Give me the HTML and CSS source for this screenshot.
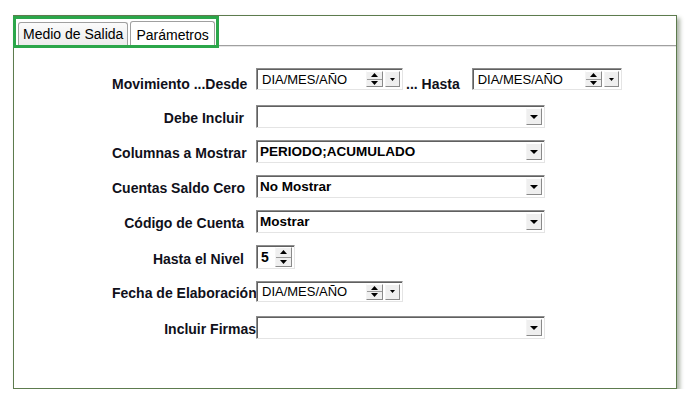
FILE: index.html
```html
<!DOCTYPE html>
<html lang="es">
<head>
<meta charset="utf-8">
<title>Parámetros</title>
<link rel="stylesheet" href="styles.css">
</head>
<body>
<div class="frame">
  <div class="tabs">
    <div class="tab">Medio de Salida</div>
    <div class="tab active">Parámetros</div>
  </div>
  <div class="highlight"></div>

  <div class="form">
    <div class="row row-end">
      <div class="label label-low">Movimiento ...Desde</div>
      <div class="date">
        <span class="value">DIA/MES/AÑO</span>
        <span class="spin"><span class="half"><svg width="7" height="4" viewBox="0 0 7 4"><path d="M3.5 0L7 4H0z"/></svg></span><span class="half"><svg width="7" height="4" viewBox="0 0 7 4"><path d="M0 0h7L3.5 4z"/></svg></span></span>
        <span class="dd small"><svg width="5" height="3" viewBox="0 0 5 3"><path d="M0 0h5L2.5 3z"/></svg></span>
      </div>
      <span class="inline-label">... Hasta</span>
      <div class="date date-wide">
        <span class="value">DIA/MES/AÑO</span>
        <span class="spin"><span class="half"><svg width="7" height="4" viewBox="0 0 7 4"><path d="M3.5 0L7 4H0z"/></svg></span><span class="half"><svg width="7" height="4" viewBox="0 0 7 4"><path d="M0 0h7L3.5 4z"/></svg></span></span>
        <span class="dd small"><svg width="5" height="3" viewBox="0 0 5 3"><path d="M0 0h5L2.5 3z"/></svg></span>
      </div>
    </div>

    <div class="row row-gap">
      <div class="label">Debe Incluir</div>
      <div class="select">
        <span class="value"></span>
        <span class="dd"><svg width="8" height="4" viewBox="0 0 8 4"><path d="M0 0h8L4 4z"/></svg></span>
      </div>
    </div>

    <div class="row">
      <div class="label">Columnas a Mostrar</div>
      <div class="select">
        <span class="value">PERIODO;ACUMULADO</span>
        <span class="dd"><svg width="8" height="4" viewBox="0 0 8 4"><path d="M0 0h8L4 4z"/></svg></span>
      </div>
    </div>

    <div class="row">
      <div class="label">Cuentas Saldo Cero</div>
      <div class="select">
        <span class="value">No Mostrar</span>
        <span class="dd"><svg width="8" height="4" viewBox="0 0 8 4"><path d="M0 0h8L4 4z"/></svg></span>
      </div>
    </div>

    <div class="row">
      <div class="label">Código de Cuenta</div>
      <div class="select">
        <span class="value">Mostrar</span>
        <span class="dd"><svg width="8" height="4" viewBox="0 0 8 4"><path d="M0 0h8L4 4z"/></svg></span>
      </div>
    </div>

    <div class="row">
      <div class="label">Hasta el Nivel</div>
      <div class="num">
        <span class="value">5</span>
        <span class="spin tall"><span class="half"><svg width="7" height="4" viewBox="0 0 7 4"><path d="M3.5 0L7 4H0z"/></svg></span><span class="half"><svg width="7" height="4" viewBox="0 0 7 4"><path d="M0 0h7L3.5 4z"/></svg></span></span>
      </div>
    </div>

    <div class="row">
      <div class="label">Fecha de Elaboración</div>
      <div class="date date-short">
        <span class="value">DIA/MES/AÑO</span>
        <span class="spin"><span class="half"><svg width="7" height="4" viewBox="0 0 7 4"><path d="M3.5 0L7 4H0z"/></svg></span><span class="half"><svg width="7" height="4" viewBox="0 0 7 4"><path d="M0 0h7L3.5 4z"/></svg></span></span>
        <span class="dd small"><svg width="5" height="3" viewBox="0 0 5 3"><path d="M0 0h5L2.5 3z"/></svg></span>
      </div>
    </div>

    <div class="row row-gap-s">
      <div class="label label-flush">Incluir Firmas</div>
      <div class="select">
        <span class="value"></span>
        <span class="dd"><svg width="8" height="4" viewBox="0 0 8 4"><path d="M0 0h8L4 4z"/></svg></span>
      </div>
    </div>
  </div>
</div>
</body>
</html>
```

FILE: styles.css
```css
* { box-sizing: border-box; }

body {
  margin: 0;
  background: #fff;
  font-family: "Liberation Sans", Arial, sans-serif;
  color: #000;
}

.frame {
  position: relative;
  margin: 15px 0 0 13px;
  width: 664px;
  height: 374px;
  border: 1px solid #5d7b4e;
  background: #fff;
  box-shadow: 3px 3px 4px rgba(70, 90, 60, 0.45);
}

.tabs {
  display: flex;
  align-items: flex-end;
  height: 30px;
  padding-left: 4px;
  border-bottom: 1px solid #a0a0a0;
  box-shadow: 0 1px 0 #e6e6e6;
}

.tab {
  height: 23px;
  padding: 2px 4px 0;
  font-size: 14px;
  line-height: 19px;
  border: 1px solid #a0a0a0;
  border-bottom: none;
  border-radius: 3px 3px 0 0;
  background: linear-gradient(#fbfbfb, #ececec);
  white-space: nowrap;
}

.tab.active {
  height: 25px;
  margin-left: 2px;
  margin-bottom: -1px;
  padding: 4px 5px 0;
  background: #fff;
}

.highlight {
  position: absolute;
  left: -1px;
  top: 0;
  width: 206px;
  height: 32px;
  border: 3px solid #2ba64a;
  pointer-events: none;
}

.form {
  display: flex;
  flex-direction: column;
  gap: 12px;
  padding-top: 22px;
}

.row {
  display: flex;
  align-items: center;
}

.row-end { align-items: flex-end; }
.row-gap { margin-top: 3px; }
.row-gap-s { margin-top: 2px; }

.label {
  width: 144px;
  margin-left: 98px;
  padding: 3px 12px 0 0;
  text-align: right;
  font-size: 14px;
  font-weight: bold;
  color: #10101a;
  white-space: nowrap;
  overflow: hidden;
}

.label-low {
  padding-top: 0;
  margin-bottom: -2px;
}

.label-flush { padding-right: 0; }

.inline-label {
  margin: 0 12px -2px 3px;
  font-size: 14px;
  font-weight: bold;
  color: #10101a;
  white-space: nowrap;
}

.select, .date, .num {
  display: flex;
  align-items: center;
  background: #fff;
  border: 1px solid;
  border-color: #8e8e8e #e4e4e4 #e4e4e4 #8e8e8e;
  box-shadow: inset 1px 1px 0 #606060;
}

.select { width: 289px; height: 23px; }
.date { width: 147px; height: 22px; }
.date-wide { width: 150px; }
.date-short { height: 21px; }
.num { width: 39px; height: 24px; }

.value {
  flex: 1;
  padding-left: 3px;
  white-space: nowrap;
  overflow: hidden;
}

.select .value {
  font-size: 13.5px;
  font-weight: bold;
}

.date .value {
  padding-left: 5px;
  font-size: 13px;
}

.num .value {
  padding-left: 4px;
  font-size: 14px;
  font-weight: bold;
}

.dd {
  display: flex;
  align-items: center;
  justify-content: center;
  width: 16px;
  height: 17px;
  margin-right: 2px;
  background: #efefef;
  border: 1px solid;
  border-color: #fff #8a8a8a #8a8a8a #f4f4f4;
}

.dd.small {
  width: 15px;
  height: 16px;
  margin-left: 2px;
}

.spin {
  display: flex;
  flex-direction: column;
  width: 17px;
  height: 16px;
  background: #efefef;
  border: 1px solid;
  border-color: #fff #8a8a8a #8a8a8a #f4f4f4;
}

.spin.tall {
  height: 20px;
  margin-right: 2px;
}

.half {
  flex: 1;
  display: flex;
  align-items: center;
  justify-content: center;
}

.half + .half {
  border-top: 1px solid #9a9a9a;
}

svg { display: block; fill: #000; }
```
